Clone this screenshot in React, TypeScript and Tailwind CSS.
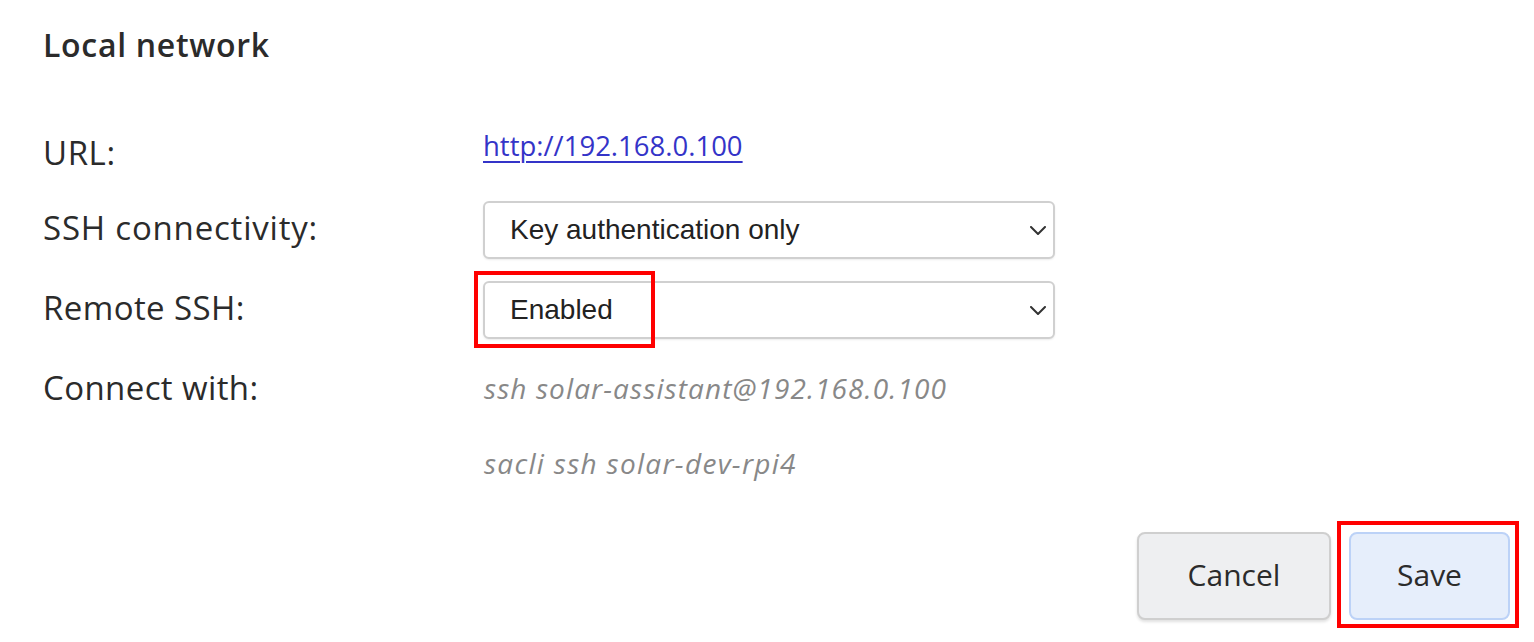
import React from "react";

function Chevron() {
  return (
    <svg width="16" height="9" viewBox="0 0 16 9" fill="none" className="shrink-0">
      <path d="M1 1L8 8L15 1" stroke="#333" strokeWidth="2" strokeLinecap="round" strokeLinejoin="round" />
    </svg>
  );
}

function Select({ value }: { value: string }) {
  return (
    <div className="flex h-[58px] w-[572px] items-center justify-between rounded-[6px] border-2 border-[#d0d0d0] bg-white pl-[25px] pr-[7px] shadow-[0_1px_2px_rgba(0,0,0,0.08)]">
      <span className="font-['Liberation_Sans',Arial,sans-serif] text-[28px] leading-none text-[#222]">{value}</span>
      <Chevron />
    </div>
  );
}

export default function App() {
  return (
    <div className="relative h-[642px] w-[1534px] overflow-hidden bg-white font-['Open_Sans','Noto_Sans',sans-serif] text-[#2b2b2b]">
      <div className="pl-[43px] pr-[24px]">
        <div className="flex h-[89px] items-center">
          <h2 className="text-[32px] font-semibold leading-none tracking-[0.7px]">Local network</h2>
        </div>

        <div className="mt-[21px] flex h-[80px] items-center">
          <div className="w-[440px] pt-[5px] text-[33px] leading-none tracking-[0.6px]">URL:</div>
          <a href="#" className="pb-[8px] text-[27.5px] leading-none text-[#3434c8] underline decoration-2 underline-offset-[5px]">
            http://192.168.0.100
          </a>
        </div>

        <div className="flex h-[80px] items-center">
          <div className="w-[440px] pb-[6px] text-[33px] leading-none tracking-[0.8px]">SSH connectivity:</div>
          <Select value="Key authentication only" />
        </div>

        <div className="flex h-[80px] items-center">
          <div className="w-[440px] pb-[5px] text-[33px] leading-none tracking-[0.4px]">Remote SSH:</div>
          <div className="relative">
            <Select value="Enabled" />
            <div className="pointer-events-none absolute left-[-9px] top-[-10px] h-[77px] w-[181px] border-4 border-[#ff0000]" />
          </div>
        </div>

        <div className="flex h-[75px] items-center">
          <div className="w-[441px] text-[33px] leading-none tracking-[0.4px]">Connect with:</div>
          <div className="text-[28px] italic leading-none tracking-[1.1px] text-[#888]">ssh solar-assistant@192.168.0.100</div>
        </div>

        <div className="flex h-[75px] items-center">
          <div className="w-[441px]" />
          <div className="text-[28px] italic leading-none tracking-[1.3px] text-[#888]">sacli ssh solar-dev-rpi4</div>
        </div>

        <div className="mt-[32px] flex justify-end gap-[18px]">
          <button className="flex h-[88px] w-[194px] items-center justify-center rounded-[8px] border-2 border-[#cfcfcf] bg-[#eeeff1] pb-[3px] text-[30px] text-[#2b2b2b] shadow-[0_2px_3px_rgba(0,0,0,0.12)]">
            Cancel
          </button>
          <div className="relative">
            <button className="flex h-[88px] w-[161px] items-center justify-center rounded-[8px] border-2 border-[#bcd2f7] bg-[#e6eefb] pb-[3px] text-[30px] text-[#2b2b2b]">
              Save
            </button>
            <div className="pointer-events-none absolute left-[-12px] top-[-11px] h-[107px] w-[182px] border-4 border-[#ff0000]" />
          </div>
        </div>
      </div>
    </div>
  );
}
